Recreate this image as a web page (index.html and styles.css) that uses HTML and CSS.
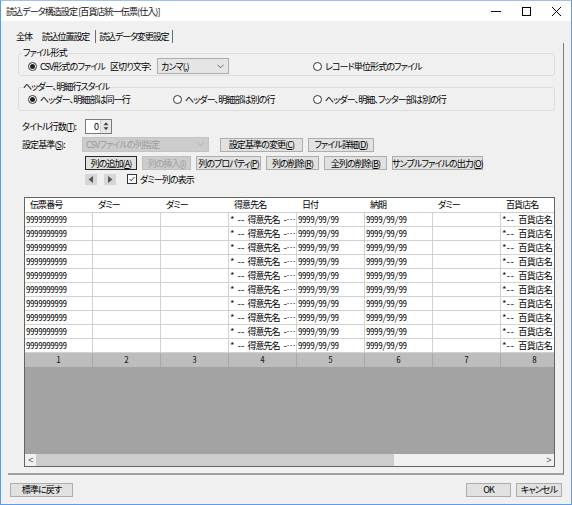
FILE: index.html
```html
<!DOCTYPE html>
<html lang="ja">
<head>
  <meta charset="UTF-8" />
  <title>読込データ構造設定</title>
  <link rel="stylesheet" href="styles.css">
</head>
<body>
  <div class="window">
    <div class="titlebar">
      <span class="title">読込データ構造設定 [百貨店統一伝票(仕入)]</span>
      <div class="controls">
        <svg viewBox="0 0 30 20"><path d="M10 10.5h10" stroke="#000" stroke-width="1"/></svg>
        <svg viewBox="0 0 30 20"><rect x="11.5" y="6.5" width="8" height="8" fill="none" stroke="#000"/></svg>
        <svg viewBox="0 0 30 20"><path d="M11 6l9 9M20 6l-9 9" stroke="#000" stroke-width="1"/></svg>
      </div>
    </div>

    <div class="tabs">
      <span class="tab">全体</span>
      <span class="tab">読込位置設定</span>
      <span class="tab active">読込データ変更設定</span>
    </div>

    <div class="panel">
      <fieldset class="group">
        <legend>ファイル形式</legend>
        <div class="opt-row">
          <label class="radio csv"><span class="dot on"></span>CSV形式のファイル</label>
          <span class="delim-label">区切り文字:</span>
          <div class="combo">
            <span>カンマ(,)</span>
            <svg viewBox="0 0 8 5"><path d="M0.5 0.5l3.5 3.5 3.5-3.5" fill="none" stroke="#555"/></svg>
          </div>
          <label class="radio"><span class="dot"></span>レコード単位形式のファイル</label>
        </div>
      </fieldset>

      <fieldset class="group second">
        <legend>ヘッダー、明細行スタイル</legend>
        <div class="opt-row">
          <label class="radio w145"><span class="dot on"></span>ヘッダー、明細部は同一行</label>
          <label class="radio w140"><span class="dot"></span>ヘッダー、明細部は別の行</label>
          <label class="radio"><span class="dot"></span>ヘッダー、明細、フッター部は別の行</label>
        </div>
      </fieldset>

      <div class="row row-title">
        <span class="row-label">タイトル行数(<u>T</u>):</span>
        <div class="spin">
          <span class="spin-val">0</span>
          <span class="spin-btns">
            <svg viewBox="0 0 10 6"><path d="M2.5 5h5L5 2z" fill="#444"/></svg>
            <svg viewBox="0 0 10 6"><path d="M2.5 1h5L5 4z" fill="#444"/></svg>
          </span>
        </div>
      </div>

      <div class="row row-setting">
        <span class="row-label short">設定基準(<u>S</u>):</span>
        <div class="combo disabled">
          <span>CSVファイルの列指定</span>
          <svg viewBox="0 0 8 5"><path d="M0.5 0.5l3.5 3.5 3.5-3.5" fill="none" stroke="#aaa"/></svg>
        </div>
        <button class="btn b-change">設定基準の変更(<u>C</u>)</button>
        <button class="btn b-detail">ファイル詳細(<u>D</u>)</button>
      </div>

      <div class="row row-buttons">
        <button class="btn focus" style="width:52px">列の追加(<u>A</u>)</button>
        <button class="btn off" style="width:49px">列の挿入(<u>I</u>)</button>
        <button class="btn" style="width:65px">列のプロパティ(<u>P</u>)</button>
        <button class="btn" style="width:53px">列の削除(<u>R</u>)</button>
        <button class="btn" style="width:63px">全列の削除(<u>B</u>)</button>
        <button class="btn" style="width:91px">サンプルファイルの出力(<u>O</u>)</button>
      </div>

      <div class="row row-arrows">
        <span class="arrow-btn"><svg viewBox="0 0 12 10"><path d="M8 1.5v7L3.5 5z" fill="#555"/></svg></span>
        <span class="arrow-btn"><svg viewBox="0 0 12 10"><path d="M4 1.5v7L8.5 5z" fill="#555"/></svg></span>
        <label class="check">
          <span class="box"><svg viewBox="0 0 10 10"><path d="M2 5l2 2.2L8 2.5" fill="none" stroke="#222" stroke-width="1.1"/></svg></span>
          ダミー列の表示
        </label>
      </div>

      <div class="grid">
        <div class="grid-head" id="grid-head"></div>
        <div id="grid-body"></div>
        <div class="grid-foot" id="grid-foot"></div>
        <div class="grid-empty"></div>
        <div class="hscroll">
          <span class="sarrow">&lt;</span>
          <span class="thumb"></span>
          <span class="track"></span>
          <span class="sarrow">&gt;</span>
        </div>
      </div>
    </div>

    <div class="footer">
      <button class="btn b-reset">標準に戻す</button>
      <span class="spacer"></span>
      <button class="btn b-ok">OK</button>
      <button class="btn b-cancel">キャンセル</button>
    </div>
  </div>

  <script>
    const columns = ['伝票番号', 'ダミー', 'ダミー', '得意先名', '日付', '納期', 'ダミー', '百貨店名'];
    const rowData = ['9999999999', '', '', '* -- 得意先名 -…', '9999/99/99', '9999/99/99', '', '*-- 百貨店名'];

    const head = document.getElementById('grid-head');
    columns.forEach(name => {
      const c = document.createElement('div');
      c.className = 'hcell';
      c.textContent = name;
      head.appendChild(c);
    });

    const body = document.getElementById('grid-body');
    for (let i = 0; i < 10; i++) {
      const r = document.createElement('div');
      r.className = 'grow';
      rowData.forEach((v, j) => {
        const c = document.createElement('div');
        c.className = j === 3 ? 'cell tight' : 'cell';
        c.textContent = v;
        r.appendChild(c);
      });
      body.appendChild(r);
    }

    const foot = document.getElementById('grid-foot');
    columns.forEach((name, i) => {
      const c = document.createElement('div');
      c.className = 'fcell';
      c.textContent = i + 1;
      foot.appendChild(c);
    });
  </script>
</body>
</html>
```

FILE: styles.css
```css
body {
  margin: 0;
  font-family: "Noto Sans CJK JP", sans-serif;
  font-size: 9px;
  font-feature-settings: "palt";
  letter-spacing: -0.9px;
  color: #000;
}
u {
  text-decoration: underline;
}
.window {
  width: 572px;
  height: 505px;
  box-sizing: border-box;
  border: 1px solid #5a9de4;
  border-top-color: #9cc3ea;
  background: #f0f0f0;
  display: flex;
  flex-direction: column;
}
.titlebar {
  height: 20px;
  background: #fff;
  display: flex;
  align-items: center;
  padding-left: 5px;
  flex-shrink: 0;
}
.title {
  flex: 1;
  color: #111;
}
.controls {
  display: flex;
}
.controls svg {
  width: 30px;
  height: 20px;
  display: block;
}
.tabs {
  height: 22px;
  display: flex;
  align-items: flex-end;
  padding-left: 11px;
  flex-shrink: 0;
  letter-spacing: -1.1px;
}
.tab {
  height: 13px;
  line-height: 13px;
  padding: 0 4px;
  margin-right: 2px;
}
.tab.active {
  border-left: 1px solid #6e6e6e;
  border-right: 1px solid #6e6e6e;
  padding-left: 3px;
}
.panel {
  margin: 0 7px;
  height: 432px;
  box-sizing: border-box;
  border-right: 1px solid #7c7c7c;
  border-bottom: 2px solid #a0a0a0;
  flex-shrink: 0;
}
.group {
  margin: 4px 8px 0 10px;
  padding: 0 0 2px 3px;
  border: 1px solid #dcdcdc;
  border-radius: 3px;
  min-width: 0;
}
.group.second {
  margin-top: 5px;
  padding-bottom: 4px;
}
.group legend {
  padding: 0 1px;
  line-height: 12px;
}
.opt-row {
  display: flex;
  align-items: center;
  height: 14px;
  margin-left: 6px;
}
.second .opt-row {
  height: 13px;
}
.radio {
  display: flex;
  align-items: center;
  white-space: nowrap;
}
.radio.csv {
  width: 82px;
}
.radio.w145 {
  width: 145px;
}
.radio.w140 {
  width: 140px;
}
.dot {
  width: 9px;
  height: 9px;
  box-sizing: border-box;
  border: 1px solid #333;
  border-radius: 50%;
  background: #fff;
  margin-right: 3px;
  display: flex;
  align-items: center;
  justify-content: center;
}
.dot.on::after {
  content: '';
  width: 5px;
  height: 5px;
  border-radius: 50%;
  background: #222;
}
.delim-label {
  width: 47px;
}
.combo {
  width: 72px;
  height: 16px;
  box-sizing: border-box;
  border: 1px solid #adadad;
  background: #e5e5e5;
  display: flex;
  align-items: center;
  justify-content: space-between;
  padding: 0 4px 0 3px;
  margin-right: 84px;
}
.combo svg {
  width: 7px;
  height: 5px;
}
.combo.disabled {
  width: 127px;
  height: 15px;
  margin-right: 11px;
  background: #cccccc;
  border-color: #c4c4c4;
  color: #9a9a9a;
}
.row {
  display: flex;
  align-items: center;
  padding-left: 14px;
}
.row-title {
  margin-top: 7px;
  height: 16px;
}
.row-label {
  width: 63px;
}
.row-label.short {
  width: 60px;
}
.spin {
  width: 27px;
  height: 15px;
  box-sizing: border-box;
  border: 1px solid #7a7a7a;
  background: #fff;
  display: flex;
  align-items: stretch;
}
.spin-val {
  flex: 1;
  text-align: right;
  padding-right: 2px;
  line-height: 13px;
}
.spin-btns {
  width: 10px;
  display: flex;
  flex-direction: column;
  background: #e8e8e8;
  border-left: 1px solid #d0d0d0;
}
.spin-btns svg {
  width: 10px;
  height: 6.5px;
  display: block;
}
.row-setting {
  margin-top: 3px;
  height: 15px;
}
.btn {
  font: inherit;
  letter-spacing: inherit;
  color: #000;
  height: 14px;
  box-sizing: border-box;
  border: 1px solid #adadad;
  background: #e1e1e1;
  padding: 0;
  display: flex;
  align-items: center;
  justify-content: center;
  white-space: nowrap;
}
.btn.focus {
  border-color: #2a2a2a;
}
.btn.off {
  background: #cccccc;
  border-color: #bfbfbf;
  color: #a0a0a0;
}
.b-change {
  width: 83px;
  margin-right: 5px;
}
.b-detail {
  width: 66px;
}
.row-buttons {
  margin-top: 4px;
  height: 14px;
  padding-left: 77px;
  gap: 5px;
}
.row-arrows {
  margin-top: 3px;
  height: 12px;
  padding-left: 77px;
}
.arrow-btn {
  width: 12px;
  height: 11px;
  background: #d6d6d6;
  margin-right: 7px;
  display: flex;
}
.arrow-btn svg {
  width: 12px;
  height: 11px;
}
.check {
  display: flex;
  align-items: center;
  margin-left: 4px;
  gap: 3px;
}
.check .box {
  width: 10px;
  height: 10px;
  box-sizing: border-box;
  border: 1px solid #333;
  background: #fff;
  display: flex;
}
.check .box svg {
  width: 8px;
  height: 8px;
}
.grid {
  margin: 12px 0 0 16px;
  width: 531px;
  height: 270px;
  box-sizing: border-box;
  border: 1px solid #646464;
  background: #fff;
  display: flex;
  flex-direction: column;
  overflow: hidden;
}
.grid-head, .grow, .grid-foot {
  display: grid;
  grid-template-columns: repeat(8, 68px);
  flex-shrink: 0;
}
.grid-head {
  height: 15px;
  border-bottom: 1px solid #cfcfcf;
  box-sizing: border-box;
}
.hcell {
  padding-left: 5px;
  line-height: 14px;
  white-space: nowrap;
  overflow: hidden;
}
.grow {
  height: 14px;
}
.cell {
  box-sizing: border-box;
  border-right: 1px solid #d2d2d2;
  border-bottom: 1px solid #d2d2d2;
  padding-left: 1px;
  line-height: 13px;
  white-space: nowrap;
  overflow: hidden;
  font-size: 9px;
  font-feature-settings: "hwid";
  letter-spacing: -0.45px;
}
.cell.tight {
  letter-spacing: -1px;
}
.grid-foot {
  height: 14px;
  background: #bdbdbd;
}
.fcell {
  border-right: 1px solid #a8a8a8;
  text-align: center;
  line-height: 14px;
  font-size: 9px;
  font-feature-settings: "hwid";
  letter-spacing: 0;
  color: #222;
}
.grid-empty {
  flex: 1;
  background: #a3a3a3;
}
.hscroll {
  height: 12px;
  display: flex;
  align-items: stretch;
  background: #f0f0f0;
  flex-shrink: 0;
}
.sarrow {
  width: 11px;
  text-align: center;
  line-height: 12px;
  font-family: "Liberation Sans", sans-serif;
  font-size: 9px;
  color: #606060;
}
.thumb {
  width: 358px;
  background: #cdcdcd;
}
.track {
  flex: 1;
}
.footer {
  flex: 1;
  display: flex;
  align-items: center;
  padding: 0 9px;
}
.spacer {
  flex: 1;
}
.b-reset {
  width: 63px;
}
.b-ok {
  width: 45px;
  margin-right: 5px;
}
.b-cancel {
  width: 46px;
}
```
